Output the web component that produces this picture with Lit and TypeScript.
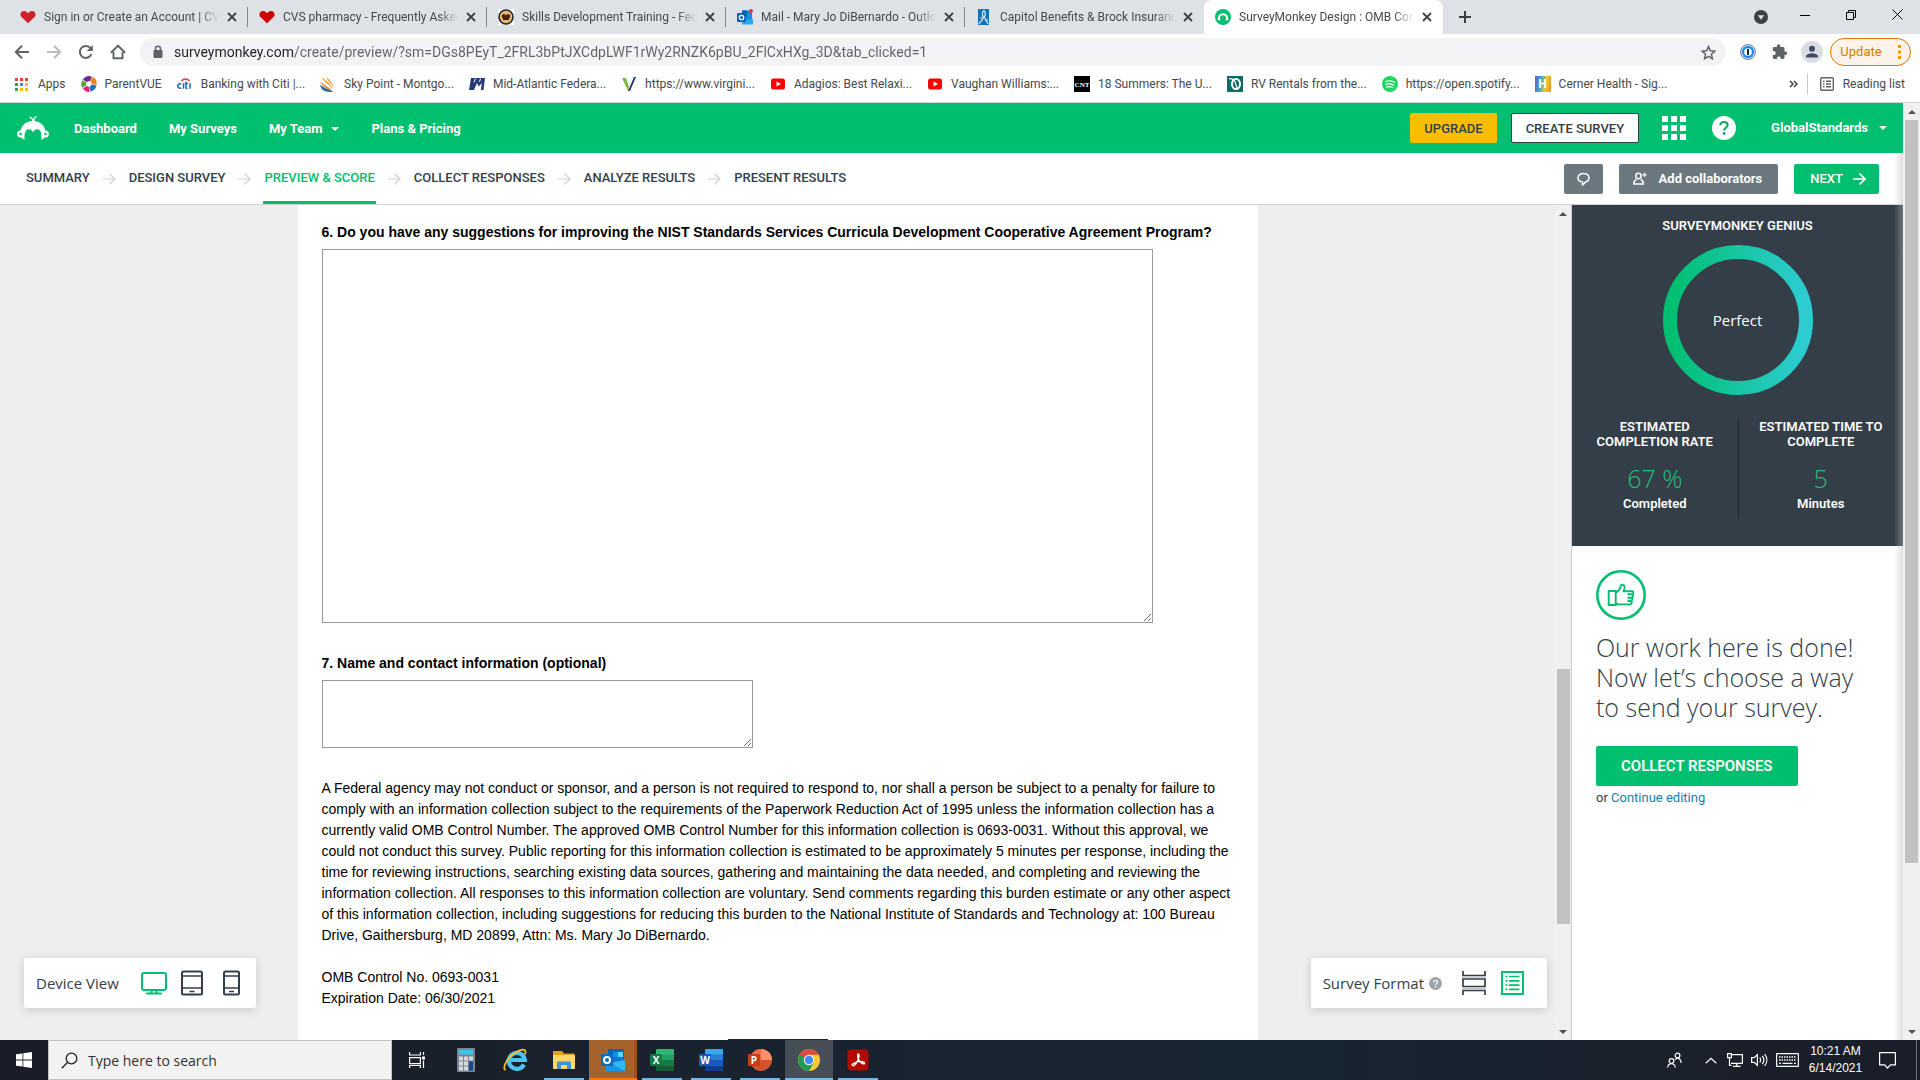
import { LitElement, html, svg, css, TemplateResult } from "lit";
import { customElement } from "lit/decorators.js";
import { classMap } from "lit/directives/class-map.js";

const icon = (w: number, h: number, body: unknown, box = `0 0 ${w} ${h}`) =>
  html`<svg width=${w} height=${h} viewBox=${box} fill="none" aria-hidden="true">${body}</svg>`;

const heart = (color: string) =>
  icon(16, 16, svg`<path d="M8 14.2 1.2 7.8C-.6 5.4 1 2 4 2c1.8 0 3.2 1 4 2.4C8.800 3 10.200 2 12 2c3 0 4.600 3.400 2.800 5.800z" fill=${color}/>`);

const monkeyPath = svg`<path d="M5.500 21.500a3.600 3.600 0 1 1-.7-7.100C5.600 8.600 10.500 5 17 5s11.400 3.600 12.200 9.400a3.600 3.600 0 1 1-.7 7.100c-.7 1.200-1.800 1.900-3.200 1.900.5-3.200.3-7-1.400-9-1.900-2.200-5.500-1.400-6.900 2-1.400-3.400-5-4.200-6.900-2-1.700 2-1.900 5.800-1.400 9-1.400 0-2.500-.7-3.200-1.900z" fill="#fff"/><circle cx="4.600" cy="18" r="1.300" fill="#00bf6f"/><circle cx="29.400" cy="18" r="1.300" fill="#00bf6f"/><path d="M17.400 5.600C17 3.400 15.800 1.800 13.600 1.200M17.600 5.400c0-2 .9-3.800 2.900-4.900" stroke="#fff" stroke-width="1.300"/>`;

const icons: Record<string, TemplateResult> = {
  cvs: heart("#cc2229"),
  cvsDark: heart("#cc0000"),
  skills: icon(16, 16, svg`<path d="M0 0h16v16H0z" fill="#fff"/><circle cx="8" cy="8" r="7" fill="#e8b96c" stroke="#1b2430" stroke-width="1.600"/><path d="M4 6c2-2 3 0 4 0s2-2 4 0c1 3-2 3-1 5H5c1-2-2-2-1-5z" fill="#4b2113"/>`),
  outlook: icon(16, 16, svg`<path d="M5 1.500h9a1 1 0 0 1 1 1V14a1 1 0 0 1-1 1H5z" fill="#1490df"/><path d="M5 1.500h5V8H5z" fill="#0364b8"/><path d="M5 10h11v4.500a1 1 0 0 1-1 1H5z" fill="#28a8ea"/><rect y="4" width="9" height="9" rx="1" fill="#0f60b8"/><circle cx="4.500" cy="8.500" r="2.200" stroke="#fff" stroke-width="1.300"/><circle cx="14" cy="2" r="2" fill="#e8383d"/>`),
  capitol: icon(16, 16, svg`<path d="M2 0h11v16H2z" fill="#0f74ba"/><path d="M3 15c2-4 4-3 4.500-7C5.500 6 6.500 3 8 1.500c1 1.500 2 4 .5 6 .5 4 2 3.500 3.500 7.500M4 9h3m2 2h3" stroke="#d9ebf8" stroke-width="1.200"/>`),
  survey: icon(16, 16, svg`<circle cx="8" cy="8" r="8" fill="#00bf6f"/><path d="M3.800 10.600C3.800 7 5.500 5.200 8 5.200s4.200 1.800 4.200 5.400" stroke="#fff" stroke-width="2"/><circle cx="4" cy="10.200" r="1.300" fill="#fff"/><circle cx="12" cy="10.200" r="1.300" fill="#fff"/>`),
  apps: icon(13, 13, svg`<path d="M0 0h3v3H0z M5 0h3v3H5z M10 0h3v3h-3z" fill="#ea4335"/><path d="M0 5h3v3H0z M0 10h3v3H0z" fill="#34a053"/><path d="M5 5h3v3H5z" fill="#4285f4"/><path d="M10 5h3v3h-3z M5 10h3v3H5z M10 10h3v3h-3z" fill="#fbbc05"/>`),
  parent: icon(16, 16, svg`<g stroke-width="5"><path d="M4 5a5 5 0 0 1 6-2" stroke="#6b2c91"/><path d="M10.500 3a5 5 0 0 1 2.500 5.500" stroke="#f58220"/><path d="M13 9a5 5 0 0 1-4 4" stroke="#1c75bc"/><path d="M8.500 13.500A5 5 0 0 1 4 11" stroke="#ec1c7b"/><path d="M3.300 10.500A5 5 0 0 1 3.500 5.500" stroke="#5aa23b"/></g>`),
  citi: icon(16, 16, svg`<path d="M4.500 5c2-2.700 6-2.700 8 0" stroke="#e0393e" stroke-width="1.400"/><path d="M4.300 8.200a2.100 2.300 0 1 0 0 3.600M6.500 7.200v5.600M9 5.500v6c0 1 .6 1.100 1.500 1.100M7.800 7.700h3M13 7.200v5.600" stroke="#1c6eb6" stroke-width="1.500"/>`),
  sky: icon(16, 16, svg`<path d="M1 1c5 3 10 7 12 13-3-5-8-7-12-13z" fill="#f0a13a"/><path d="M0 5c5 5 10 6 12 10C7 13 2 10 0 5z" fill="#e98a2b"/><path d="M0 8.500c4 4 9 4 13 7.500C6 16.500 1 15 0 8.500z" fill="#2f6f9b"/><path d="M6 1c5 3 7 7 8 12-2-5-6-7-8-12z" fill="#f3a84f"/>`),
  mid: icon(16, 16, svg`<path d="M2 2h14l-1.500 12h-2.700l1-7-3 3.500L8 7l-3 7H0z" fill="#263a78"/><path d="M6.500 2.500 5 6.500M11.500 2.500l-1 3.500" stroke="#fff"/>`),
  virginia: icon(16, 16, svg`<path d="M1 2h4l3 9-1 4z" fill="#7dbb42"/><path d="M13 1h2L9 15H7z" fill="#1c3664"/>`),
  youtube: icon(16, 16, svg`<rect x="1" y="2.500" width="14" height="11" rx="2.500" fill="#f00"/><path d="m6.500 5.500 4.500 2.500-4.500 2.500z" fill="#fff"/>`),
  cnt: icon(16, 16, svg`<path d="M0 0h16v16H0z" fill="#000"/><text x="8" y="10.500" text-anchor="middle" font-size="7" font-family="Liberation Serif, serif" font-weight="700" fill="#fff">CNT</text>`),
  rv: icon(16, 16, svg`<path d="M0 0h16v16H0z" fill="#0f6b63"/><ellipse cx="9" cy="8" rx="4" ry="5" stroke="#fff" stroke-width="2"/><path d="M2 3c3-1 5 1 6 3s1 5 3 7" stroke="#fff" stroke-width="1.200"/>`),
  spotify: icon(16, 16, svg`<circle cx="8" cy="8" r="8" fill="#1ed760"/><path d="M3.500 5.500c3-.9 6.500-.6 9 .8M4 8.200c2.600-.7 5.500-.4 7.700.8M4.500 10.800c2.200-.5 4.300-.3 6.200.7" stroke="#fff" stroke-width="1.300" stroke-linecap="round"/>`),
  cerner: html`<span class="cerner">H</span>`,
};

const tabs = [
  { icon: "cvs", title: "Sign in or Create an Account | CVS" },
  { icon: "cvsDark", title: "CVS pharmacy - Frequently Asked" },
  { icon: "skills", title: "Skills Development Training - Federal" },
  { icon: "outlook", title: "Mail - Mary Jo DiBernardo - Outlook" },
  { icon: "capitol", title: "Capitol Benefits & Brock Insurance" },
  { icon: "survey", title: "SurveyMonkey Design : OMB Control", active: true },
];

const bookmarks = [
  ["apps", "Apps"], ["parent", "ParentVUE"], ["citi", "Banking with Citi |..."], ["sky", "Sky Point - Montgo..."],
  ["mid", "Mid-Atlantic Federa..."], ["virginia", "https://www.virgini..."], ["youtube", "Adagios: Best Relaxi..."],
  ["youtube", "Vaughan Williams:..."], ["cnt", "18 Summers: The U..."], ["rv", "RV Rentals from the..."],
  ["spotify", "https://open.spotify..."], ["cerner", "Cerner Health - Sig..."],
];

const base = css`
  * { box-sizing: border-box; }
  button, input, textarea { font: inherit; color: inherit; margin: 0; }
  button { border: 0; padding: 0; background: none; cursor: pointer; display: flex; align-items: center; justify-content: center; }
  a { color: inherit; text-decoration: none; }
  svg { display: block; flex: none; }
`;

@customElement("browser-chrome")
export class BrowserChrome extends LitElement {
  static styles = [base, css`
    :host { display: block; flex: none; font: 12px/16px Roboto, sans-serif; color: #45484c; background: #fff; border-bottom: 1px solid #d4d6d9; }
    .strip { display: flex; height: 34px; padding-left: 9px; background: #dee1e6; }
    .tab { position: relative; display: flex; align-items: center; gap: 8px; flex: 0 1 239px; min-width: 0; padding: 0 11px; }
    .tab::after { content: ""; position: absolute; right: 0; top: 7px; width: 1px; height: 20px; background: #84878c; }
    .tab.last::after, .tab.active::after { display: none; }
    .tab.active { background: #fff; border-radius: 8px 8px 0 0; }
    .title { flex: 1; min-width: 0; overflow: hidden; white-space: nowrap; mask-image: linear-gradient(90deg, #000 calc(100% - 20px), transparent); }
    .close { width: 10px; height: 16px; }
    .plus { width: 44px; }
    .grow { flex: 1; }
    .win { width: 46px; height: 29px; }
    .drop { width: 42px; }
    .bar { display: flex; align-items: center; padding: 4px 9px 0 6px; }
    .tool { width: 32px; height: 28px; }
    .omni { display: flex; align-items: center; flex: 1; height: 28px; margin: 0 6px; padding: 0 10px 0 12px; border-radius: 14px; background: #f1f3f4; }
    .url { flex: 1; min-width: 0; height: 28px; margin-left: 10px; padding: 0; border: 0; outline: 0; font-size: 14px; color: transparent; background: linear-gradient(90deg, #202124 121px, #5f6368 121px) text; -webkit-background-clip: text; }
    .update { height: 28px; width: 81px; margin-left: 2px; border: 1px solid #e37400; border-radius: 14px; background: #fdf3ea; color: #e37400; gap: 16px; font-size: 13px; }
    .marks { display: flex; align-items: center; height: 36px; padding: 0 15px; gap: 15px; white-space: nowrap; }
    .mark { display: flex; align-items: center; gap: 8px; }
    .mark:first-child { gap: 10px; }
    .reading { display: flex; align-items: center; gap: 9px; padding-left: 12px; border-left: 1px solid #c4c7ca; height: 20px; }
    .more { margin-right: -6px; }
    .cerner { display: grid; place-items: center; width: 16px; height: 16px; font-weight: 700; color: #fff; background: linear-gradient(100deg, #7a4fc0, #36a9d8 35%, #f3c72c 65%, #f08a2c); }
  `];

  render() {
    return html`
      <div class="strip" role="tablist">
        ${tabs.map((t, i) => html`
          <div role="tab" class=${classMap({ tab: true, active: !!t.active, last: i === 4 })}>
            ${icons[t.icon]}<span class="title">${t.title}</span>
            <button class="close" aria-label="Close tab">${icon(10, 10, svg`<path d="m1 1 8 8M9 1 1 9" stroke="#3c4043" stroke-width="1.800"/>`)}</button>
          </div>`)}
        <button class="plus" aria-label="New tab">${icon(12, 12, svg`<path d="M6 0v12M0 6h12" stroke="#3c4043" stroke-width="2"/>`)}</button>
        <span class="grow"></span>
        <button class="drop" aria-label="Search tabs">${icon(14, 14, svg`<circle cx="7" cy="7" r="7" fill="#3c4043"/><path d="M3.800 5.300h6.400L7 9.800z" fill="#dee1e6"/>`)}</button>
        <button class="win" aria-label="Minimize">${icon(10, 10, svg`<path d="M0 5.500h10" stroke="#000"/>`)}</button>
        <button class="win" aria-label="Restore">${icon(10, 10, svg`<path d="M.5 2.500h7v7h-7zM2.500 2.500v-2h7v7h-2" stroke="#000"/>`)}</button>
        <button class="win" aria-label="Close">${icon(11, 11, svg`<path d="m.5.5 10 10M10.500.5l-10 10" stroke="#000"/>`)}</button>
      </div>
      <div class="bar">
        <button class="tool" aria-label="Back">${icon(16, 16, svg`<path d="M15 8H2.500M8 1.800 1.800 8 8 14.200" stroke="#5f6368" stroke-width="2"/>`)}</button>
        <button class="tool" aria-label="Forward">${icon(16, 16, svg`<path d="M1 8h12.500M8 1.800 14.200 8 8 14.200" stroke="#babcbe" stroke-width="2"/>`)}</button>
        <button class="tool" aria-label="Reload">${icon(16, 16, svg`<path d="M13.500 10A6 6 0 1 1 12.600 4.200" stroke="#5f6368" stroke-width="2"/><path d="M14.800 1v6h-6z" fill="#5f6368"/>`)}</button>
        <button class="tool" aria-label="Home">${icon(16, 16, svg`<path d="M3.500 8v6.200h9V8M.9 8.700 8 1.700l7.100 7" stroke="#5f6368" stroke-width="1.900"/>`)}</button>
        <div class="omni">
          ${icon(12, 14, svg`<rect x="1.500" y="5" width="9" height="8" rx="1" fill="#5f6368"/><path d="M3.500 5.500V3.700a2.500 2.500 0 0 1 5 0v1.800" stroke="#5f6368" stroke-width="1.500"/>`)}
          <input class="url" aria-label="Address" value="surveymonkey.com/create/preview/?sm=DGs8PEyT_2FRL3bPtJXCdpLWF1rWy2RNZK6pBU_2FlCxHXg_3D&tab_clicked=1">
          <button aria-label="Bookmark">${icon(15, 15, svg`<path d="m7.500 1.600 1.800 4.200 4.500.4-3.400 3 1 4.500-3.900-2.400-3.900 2.400 1-4.500-3.400-3 4.500-.4z" stroke="#5f6368" stroke-width="1.500"/>`)}</button>
        </div>
        <button class="tool" aria-label="Password manager">${icon(16, 16, svg`<circle cx="8" cy="8" r="7.400" fill="#fff" stroke="#6b7075"/><circle cx="8" cy="8" r="5" stroke="#1a8cff" stroke-width="2.400"/><path d="M8 5v6" stroke="#23272b" stroke-width="2"/>`)}</button>
        <button class="tool" aria-label="Extensions">${icon(16, 16, svg`<path d="M13.500 7.500h-1V4.400c0-.8-.6-1.400-1.400-1.400H8.300V2a1.700 1.700 0 0 0-3.400 0v1H2.200C1.400 3 .8 3.600.8 4.400v2.700h1a1.900 1.900 0 0 1 0 3.800h-1v2.700c0 .8.600 1.400 1.400 1.400H5v-1a1.900 1.900 0 0 1 3.700 0v1h2.400c.8 0 1.400-.6 1.400-1.400v-2.700h1a1.700 1.700 0 0 0 0-3.400z" fill="#5f6368"/>`)}</button>
        <button class="tool" aria-label="Profile">${icon(22, 22, svg`<circle cx="11" cy="11" r="11" fill="#dadde4"/><circle cx="11" cy="7.700" r="3" fill="#414a66"/><path d="M5 16.500v-1c0-2 4-3.200 6-3.200s6 1.200 6 3.200v1z" fill="#414a66"/>`)}</button>
        <button class="update">Update ${icon(3, 14, svg`<path d="M0 0h3v3H0zM0 5.500h3v3H0zM0 11h3v3H0z" fill="#f29900"/>`)}</button>
      </div>
      <nav class="marks" aria-label="Bookmarks">
        ${bookmarks.map(([i, t]) => html`<a class="mark" href="#">${icons[i]}${t}</a>`)}
        <span class="grow"></span>
        <button class="more" aria-label="More bookmarks">${icon(9, 8, svg`<path d="m1 1 3 3-3 3M5 1l3 3-3 3" stroke="#3c4043" stroke-width="1.500"/>`)}</button>
        <a class="reading" href="#">${icon(14, 14, svg`<rect x=".7" y=".7" width="12.600" height="12.600" rx="1" stroke="#5f6368" stroke-width="1.400"/><path d="M3 4.200h1.500M3 7h1.500M3 9.800h1.500M6 4.200h5M6 7h5M6 9.800h5" stroke="#5f6368" stroke-width="1.400"/>`)}Reading list</a>
      </nav>`;
  }
}

const caret = icon(8, 4, svg`<path d="M0 0h8L4 4z" fill="#fff"/>`);
const stepArrow = icon(13, 12, svg`<path d="M0 6h12M6.500.7 12 6l-5.500 5.300" stroke="#d0d2d3" stroke-width="1.200"/>`);
const steps = ["SUMMARY", "DESIGN SURVEY", "PREVIEW & SCORE", "COLLECT RESPONSES", "ANALYZE RESULTS", "PRESENT RESULTS"];

@customElement("site-header")
export class SiteHeader extends LitElement {
  static styles = [base, css`
    :host { display: block; flex: none; font: 700 13px/16px Roboto, sans-serif; }
    .top { display: flex; align-items: center; height: 50px; padding: 0 16px; background: #00bf6f; color: #fff; }
    .menu { display: flex; gap: 32px; margin: 0 auto 0 24px; padding-top: 2px; }
    .team { display: flex; align-items: center; gap: 9px; }
    .btn { height: 30px; border-radius: 2px; font-weight: 500; }
    .upgrade { padding: 2px 14px 0; margin-right: 14px; background: #f9be00; color: #333e48; }
    .create { padding: 2px 14px 0; border: 1px solid #333e48; background: #fff; color: #333e48; }
    .apps { margin: 0 26px 0 23px; }
    .account { gap: 11px; margin-left: 35px; font-weight: 700; }
    .sub { display: flex; align-items: center; justify-content: space-between; height: 52px; padding: 0 24px 0 25px; background: #fff; border-bottom: 1px solid #d0d2d3; color: #333e48; }
    .steps { display: flex; align-items: center; gap: 12px; height: 51px; margin: 0; padding: 0; list-style: none; font-weight: 500; }
    .step { display: flex; align-items: center; height: 51px; padding: 0 1px 1px; border-top: 3px solid transparent; border-bottom: 3px solid transparent; }
    .step.current { color: #00bf6f; border-bottom-color: #00bf6f; }
    .actions { display: flex; gap: 16px; color: #fff; }
    .gray { background: #6b787f; }
    .chat { width: 39px; }
    .collab { gap: 12px; padding: 0 16px 0 14px; font-weight: 700; }
    .next { gap: 10px; padding: 0 13px 0 16px; background: #00bf6f; }
  `];

  render() {
    return html`
      <header class="top">
        <a href="#" aria-label="Home">${icon(34, 24, monkeyPath)}</a>
        <nav class="menu">
          <a href="#">Dashboard</a><a href="#">My Surveys</a>
          <a class="team" href="#">My Team ${caret}</a><a href="#">Plans &amp; Pricing</a>
        </nav>
        <button class="btn upgrade">UPGRADE</button>
        <button class="btn create">CREATE SURVEY</button>
        <button class="apps" aria-label="Products">${icon(24, 24, svg`<path d="M0 0h6v6H0zM9 0h6v6H9zM18 0h6v6h-6zM0 9h6v6H0zM9 9h6v6H9zM18 9h6v6h-6zM0 18h6v6H0zM9 18h6v6H9zM18 18h6v6h-6z" fill="#fff"/>`)}</button>
        <button aria-label="Help">${icon(24, 24, svg`<circle cx="12" cy="12" r="12" fill="#fff"/><path d="M8.300 9.300c0-2.100 1.500-3.400 3.700-3.400 2.100 0 3.600 1.200 3.600 3.100 0 2.800-3.500 2.700-3.500 5.600" stroke="#00a862" stroke-width="2"/><circle cx="12.100" cy="17.400" r="1.400" fill="#00a862"/>`)}</button>
        <button class="account">GlobalStandards ${caret}</button>
      </header>
      <div class="sub">
        <ol class="steps">
          ${steps.map((s, i) => html`${i ? html`<li aria-hidden="true">${stepArrow}</li>` : ""}
            <li><a href="#" class=${classMap({ step: true, current: i === 2 })}>${s}</a></li>`)}
        </ol>
        <div class="actions">
          <button class="btn gray chat" aria-label="Comments">${icon(15, 14, svg`<path d="M7.500 1.500c-3.200 0-5.500 1.800-5.500 4.300s2 4 4.500 4.300V13l3.300-3.100C12 9.300 13 7.800 13 5.800c0-2.500-2.300-4.300-5.500-4.300z" stroke="#fff" stroke-width="1.500" stroke-linejoin="round"/>`)}</button>
          <button class="btn gray collab">${icon(14, 13, svg`<circle cx="5.500" cy="4" r="2.700" stroke="#fff" stroke-width="1.500"/><path d="M3.500 7.500C1.500 8.200.8 9.500.8 12h9.600c0-2.500-.8-3.800-2.700-4.500" stroke="#fff" stroke-width="1.500"/><path d="M11.500.8v4M9.500 2.800h4" stroke="#fff" stroke-width="1.300"/>`)}Add collaborators</button>
          <button class="btn next">NEXT ${icon(13, 12, svg`<path d="M0 6h12M6.500.7 12 6l-5.500 5.300" stroke="#fff" stroke-width="1.700"/>`)}</button>
        </div>
      </div>`;
  }
}

@customElement("scroll-bar")
export class ScrollBar extends LitElement {
  static properties = { before: { type: Number }, size: { type: Number }, after: { type: Number } };
  declare before: number;
  declare size: number;
  declare after: number;
  static styles = css`
    :host { display: flex; flex-direction: column; flex: none; align-items: center; width: 17px; background: #f0f0f0; }
    .end { display: grid; place-items: center; height: 17px; flex: none; }
    .thumb { width: 13px; background: #c1c1c1; }
    svg { display: block; }
  `;
  render() {
    return html`
      <span class="end">${icon(8, 4, svg`<path d="M0 4h8L4 0z" fill="#505050"/>`)}</span>
      <div style="flex:${this.before}"></div><div class="thumb" style="flex:${this.size}"></div><div style="flex:${this.after}"></div>
      <span class="end">${icon(8, 4, svg`<path d="M0 0h8L4 4z" fill="#505050"/>`)}</span>`;
  }
}

@customElement("survey-stage")
export class SurveyStage extends LitElement {
  static styles = [base, css`
    :host { position: relative; display: block; flex: 1; min-width: 0; background: #eee; overflow: hidden; font: 14px/21px "Liberation Sans", Arial, sans-serif; color: #000; }
    .sheet { display: flex; flex-direction: column; align-items: flex-start; max-width: 960px; height: 100%; margin: 0 auto; padding: 17px 24px 0; background: #fff; }
    .q { font-weight: 700; margin-bottom: 6px; }
    .box { display: block; width: 100%; border: 1px solid #999; background: #fff; resize: both; outline: 0; }
    .essay { max-width: 831px; height: 374px; margin-bottom: 30px; }
    .contact { max-width: 431px; height: 68px; margin-bottom: 30px; }
    p { margin: 0 0 21px; }
    .done { align-self: center; width: 100px; height: 1px; margin-top: auto; background: #1b1b78; }
    .card { position: absolute; bottom: 32px; display: flex; align-items: center; height: 50px; padding: 0 12px; border-radius: 2px; background: #fff; box-shadow: 0 2px 10px rgba(0, 0, 0, .16); font: 15px/20px "Open Sans", sans-serif; color: #333e48; }
    .device { left: 24px; padding-right: 16px; }
    .desktop { margin: 0 14px 0 22px; }
    .tablet { margin-right: 20px; }
    .format { right: 8px; padding-right: 23px; }
    .help { margin: 0 20px 0 5px; }
    .classic { margin-left: 15px; }
  `];

  render() {
    return html`
      <div class="sheet">
        <label class="q" for="q6">6. Do you have any suggestions for improving the NIST Standards Services Curricula Development Cooperative Agreement Program?</label>
        <textarea class="box essay" id="q6"></textarea>
        <label class="q" for="q7">7. Name and contact information (optional)</label>
        <textarea class="box contact" id="q7"></textarea>
        <p>A Federal agency may not conduct or sponsor, and a person is not required to respond to, nor shall a person be subject to a penalty for failure to comply with an information collection subject to the requirements of the Paperwork Reduction Act of 1995 unless the information collection has a currently valid OMB Control Number. The approved OMB Control Number for this information collection is 0693-0031. Without this approval, we could not conduct this survey. Public reporting for this information collection is estimated to be approximately 5 minutes per response, including the time for reviewing instructions, searching existing data sources, gathering and maintaining the data needed, and completing and reviewing the information collection. All responses to this information collection are voluntary. Send comments regarding this burden estimate or any other aspect of this information collection, including suggestions for reducing this burden to the National Institute of Standards and Technology at: 100 Bureau Drive, Gaithersburg, MD 20899, Attn: Ms. Mary Jo DiBernardo.</p>
        <p>OMB Control No. 0693-0031<br>Expiration Date: 06/30/2021</p>
        <div class="done"></div>
      </div>
      <div class="card device">Device View
        <button class="desktop" aria-label="Desktop">${icon(26, 23, svg`<rect x="1" y="1" width="24" height="17" rx="2" stroke="#00bf6f" stroke-width="2"/><path d="M10.500 18v3M15.500 18v3M6 21.500h14" stroke="#00bf6f" stroke-width="2" stroke-linecap="round"/>`)}</button>
        <button class="tablet" aria-label="Tablet">${icon(22, 26, svg`<rect x="1" y="1.500" width="20" height="23" rx="1.500" stroke="#333e48" stroke-width="2"/><path d="M1 6h20M1 18h20M8.500 21.500h5" stroke="#333e48" stroke-width="1.600"/>`)}</button>
        <button aria-label="Phone">${icon(17, 26, svg`<rect x="1" y="1.500" width="15" height="23" rx="1.500" stroke="#333e48" stroke-width="2"/><path d="M1 6h15M1 18h15M6 21.500h5" stroke="#333e48" stroke-width="1.600"/>`)}</button>
      </div>
      <div class="card format">Survey Format
        <button class="help" aria-label="About survey format">${icon(13, 13, svg`<circle cx="6.500" cy="6.500" r="6.500" fill="#9ea5aa"/><path d="M4.600 5.200c0-1.200.8-1.900 2-1.900s1.900.7 1.900 1.700c0 1.500-1.900 1.400-1.900 3" stroke="#fff" stroke-width="1.200"/><circle cx="6.600" cy="9.700" r=".8" fill="#fff"/>`)}</button>
        <button aria-label="One question at a time">${icon(24, 24, svg`<path d="M1 0v4.500h22V0M1 8h22v7.500H1zM1 24v-4.500h22V24" stroke="#333e48" stroke-width="1.700"/><path d="M0 6.200h24M0 17.500h24" stroke="#b9bec2"/>`)}</button>
        <button class="classic" aria-label="Classic">${icon(23, 24, svg`<path d="M1 1h21v22H1z" stroke="#00bf6f" stroke-width="2"/><path d="M4.500 5.500h2M8 5.500h10.500M4.500 9.800h2M8 9.800h10.500M4.500 14.100h2M8 14.100h10.500M4.500 18.400h2M8 18.400h10.500" stroke="#00bf6f" stroke-width="1.700"/>`)}</button>
      </div>`;
  }
}

@customElement("genius-panel")
export class GeniusPanel extends LitElement {
  static styles = [base, css`
    :host { display: block; flex: none; box-sizing: border-box; width: 332px; border-left: 1px solid #ccc; background: #fff; font: 13px/16px Roboto, sans-serif; color: #333e48; }
    .score { padding: 13px 0 27px; background: #333e48; color: #fff; text-align: center; font-weight: 600; }
    .ring { display: grid; place-items: center; width: 150px; height: 150px; margin: 11px auto 24px; }
    .ring > * { grid-area: 1 / 1; }
    .verdict { font: 15px/20px "Open Sans", sans-serif; }
    .stats { display: grid; grid-template-columns: 1fr 1fr; min-height: 100px; }
    .stat { padding: 0 16px; line-height: 15px; }
    .stat + .stat { border-left: 1px solid #1f2932; }
    .num { margin: 14px 0 1px; font: 300 25px/30px "Open Sans", sans-serif; color: #1fbf75; }
    .unit { line-height: 20px; }
    .todo { padding: 24px; }
    h2 { margin: 12px 0 24px; padding-right: 16px; font: 300 25px/30px "Open Sans", sans-serif; }
    .collect { height: 40px; padding: 0 25px; border-radius: 2px; background: #00bf6f; color: #fff; font-size: 15px; font-weight: 600; }
    .or { margin: 4px 0 0; }
    .or a { color: #1583ad; }
  `];

  render() {
    return html`
      <section class="score">
        <div>SURVEYMONKEY GENIUS</div>
        <div class="ring">
          ${icon(150, 150, svg`<defs><linearGradient id="g"><stop stop-color="#00bf6f"/><stop offset="1" stop-color="#2dccd3"/></linearGradient></defs><circle cx="75" cy="75" r="68" stroke="url(#g)" stroke-width="14"/>`)}
          <span class="verdict">Perfect</span>
        </div>
        <div class="stats">
          <div class="stat">ESTIMATED COMPLETION RATE<div class="num">67 %</div><div class="unit">Completed</div></div>
          <div class="stat">ESTIMATED TIME TO COMPLETE<div class="num">5</div><div class="unit">Minutes</div></div>
        </div>
      </section>
      <section class="todo">
        ${icon(50, 50, svg`<circle cx="25" cy="25" r="23.700" stroke="#00bf6f" stroke-width="2.600"/><path d="M12.700 21h7v14h-7zM19.700 22.500c2.500-.8 4.300-3.200 5-6.500.4-1.700 3.500-1.800 3.800.7.200 1.700-.3 3.300-.8 4.600h8.500c1.600 0 1.600 2.700 0 2.900 1.400.4 1.200 3-.5 3.300 1.300.5 1 2.900-.5 3.100 1 .6.600 3.800-1.200 3.800H23c-1.300 0-2.200-.4-3.300-.8M31.500 24.300h4.700M31.500 27.700h4.200M31.500 31h3.600" stroke="#00bf6f" stroke-width="1.900"/>`)}
        <h2>Our work here is done! Now let’s choose a way to send your survey.</h2>
        <button class="collect">COLLECT RESPONSES</button>
        <p class="or">or <a href="#">Continue editing</a></p>
      </section>`;
  }
}

const office = (letter: string, dark: string, colors: string[]) => icon(26, 24, svg`
  <rect x="7" y="1" width="18" height="22" rx="1" fill=${colors[0]}/><path d="M7 6.500h18V12H7z" fill=${colors[1]}/>
  <path d="M7 12h18v5.500H7z" fill=${colors[2]}/><path d="M7 17.500h18V22a1 1 0 0 1-1 1H8a1 1 0 0 1-1-1z" fill=${colors[3]}/>
  <rect x="1" y="6" width="12" height="12" rx="1" fill=${dark}/>
  <text x="7" y="16" text-anchor="middle" font-family="Open Sans, sans-serif" font-weight="700" font-size="10" fill="#fff">${letter}</text>`);

const apps: { name: string; cls?: string; art: TemplateResult }[] = [
  { name: "Calculator", art: icon(18, 24, svg`<rect width="18" height="24" rx="1" fill="#7b858f"/><path d="M2 2h14v4.500H2z" fill="#3cc3f2"/><path d="M2 8.500h4v4H2zM7 8.500h4v4H7zM12 8.500h4v4h-4zM2 13.500h4v4H2zM7 13.500h4v4H7zM2 18.500h4v4H2zM7 18.500h4v4H7z" fill="#d5dade"/><path d="M12 13.500h4v9h-4z" fill="#134a8e"/>`) },
  { name: "Internet Explorer", art: icon(24, 24, svg`<path d="M21 16.500a8 8 0 1 1 .8-4.500H6.500" stroke="#4fc3f0" stroke-width="4.200"/><path d="M2.500 22C-1 20 4 10 11 5.500 16 2 22 0 22.500 3.500c.2 1-.2 2-.8 3" stroke="#f2c230" stroke-width="1.700"/>`) },
  { name: "File Explorer", cls: "open", art: icon(24, 20, svg`<path d="M1 1h9l2 2.500h10.500V18H1z" fill="#e0a11b"/><path d="M1 5h22v14H1z" fill="#fdd767"/><path d="M5 19v-6.500a1 1 0 0 1 1-1h12a1 1 0 0 1 1 1V19h-4v-4H9v4z" fill="#3f92d8"/>`) },
  { name: "Outlook", cls: "open alert", art: icon(26, 24, svg`<path d="M8 1h15a1 1 0 0 1 1 1v12H8z" fill="#1066b5"/><path d="M13 4h5v5h-5z" fill="#1490df"/><path d="M18 4h5v5h-5z" fill="#50d9ff"/><path d="M13 9h10v5H13z" fill="#0f78d4"/><path d="m6 13 9 5 10-6v10a1 1 0 0 1-1 1H7a1 1 0 0 1-1-1z" fill="#1b96e4"/><path d="m10 15 15 8V12z" fill="#35b8f1"/><rect x="1" y="6" width="12" height="12" rx="1" fill="#0f6cbd"/><circle cx="7" cy="12" r="3" stroke="#fff" stroke-width="2"/>`) },
  { name: "Excel", cls: "open", art: office("X", "#107c41", ["#2fb673", "#21a366", "#107c41", "#185c37"]) },
  { name: "Word", cls: "open", art: office("W", "#185abd", ["#41a5ee", "#2b7cd3", "#185abd", "#103f91"]) },
  { name: "PowerPoint", cls: "open", art: icon(26, 24, svg`<circle cx="14" cy="12" r="11" fill="#d35230"/><path d="M14 1a11 11 0 0 1 11 11H14z" fill="#ff8f6b"/><path d="M14 1a11 11 0 0 0-11 11h11z" fill="#ed6c47"/><rect x="1" y="6" width="12" height="12" rx="1" fill="#c43e1c"/><text x="7" y="16" text-anchor="middle" font-family="Open Sans, sans-serif" font-weight="700" font-size="10" fill="#fff">P</text>`) },
  { name: "Chrome", cls: "open front", art: icon(24, 24, svg`<circle cx="12" cy="12" r="11" fill="#fbc934"/><path d="M2.500 6.500A11 11 0 0 1 21.500 6.500H12L7.200 14.700z" fill="#dd4b3e"/><path d="M2.500 6.500A11 11 0 0 0 12 23l4.800-8.300L12 12z" fill="#229a53"/><path d="M2.500 6.500A11 11 0 0 1 21.500 6.500H12z" fill="#dd4b3e"/><circle cx="12" cy="12" r="5.200" fill="#f4f6f8"/><circle cx="12" cy="12" r="4.200" fill="#4689f2"/>`) },
  { name: "Acrobat", cls: "open", art: icon(22, 22, svg`<rect x=".5" y=".5" width="21" height="21" rx="4" fill="#b30b00"/><path d="M5.500 16.500c-1.700-1.200 3-3.500 6.500-4s6 .8 5.500 2c-1 1.500-5-1.500-6.200-4.500-.9-2.500-1-5 0-5s1 3-.3 6c-1.200 2.800-4 6.500-5.500 5.500z" stroke="#fff" stroke-width="1.400"/>`) },
];

@customElement("task-bar")
export class TaskBar extends LitElement {
  static styles = [base, css`
    :host { display: flex; flex: none; height: 40px; background: linear-gradient(90deg, #1a1c28, #19232f 40%, #172531 68%, #1a202c 88%, #191e29); color: #fff; font: 12px/17px "Open Sans", sans-serif; }
    .start { width: 48px; }
    .search { display: flex; align-items: center; gap: 10px; flex: 0 1 344px; padding: 0 12px; border: 1px solid #c3c3c3; background: #f2f2f2; color: #333; }
    .search input { flex: 1; min-width: 0; border: 0; outline: 0; background: none; padding: 0; font-size: 14px; }
    .search input::placeholder { color: #333; opacity: 1; }
    .view { width: 50px; }
    .apps { display: flex; gap: 1px; }
    .app { position: relative; width: 48px; }
    .open::after { content: ""; position: absolute; left: 4px; right: 4px; bottom: 0; height: 2px; background: #76b9ed; }
    .alert { background: #a5622d; box-shadow: inset -3px 0 #955323; }
    .alert::after { left: 0; right: 0; background: #ff7700; }
    .front { background: #464e57; }
    .front::after { left: 0; right: 0; }
    .tray { display: flex; align-items: center; margin-left: auto; padding-right: 20px; }
    .people { margin-right: 23px; }
    .up { margin-right: 10px; }
    .net { margin-right: 8px; }
    .vol { margin-right: 8px; }
    .clock { width: 73px; text-align: center; font: 12px/17px "Liberation Sans", sans-serif; }
    .peek { width: 4px; border-left: 1px solid #66707a; }
    .note { margin-left: 7px; }
  `];

  render() {
    return html`
      <button class="start" aria-label="Start">${icon(16, 16, svg`<path d="M0 2.300 6.500 1.400v6.200H0zM7.300 1.300 16 0v7.600H7.300zM0 8.400h6.500v6.200L0 13.700zM7.300 8.400H16V16l-8.700-1.200z" fill="#fff"/>`)}</button>
      <div class="search">
        ${icon(17, 17, svg`<circle cx="10.500" cy="6.500" r="5.300" stroke="#222" stroke-width="1.300"/><path d="M6.700 10.300.8 16.200" stroke="#222" stroke-width="1.300"/>`)}
        <input aria-label="Search" placeholder="Type here to search">
      </div>
      <button class="view" aria-label="Task view">${icon(16, 16, svg`<path d="M.6 0v3h10.800V0M.6 5.600h10.800v6H.6zM.6 16v-2.500h10.800V16M14.500 0v3M14.500 8.500V16" stroke="#fff" stroke-width="1.200"/><path d="M13 4.500h3v3h-3z" fill="#fff"/>`)}</button>
      <div class="apps">${apps.map(a => html`<button class="app ${a.cls ?? ""}" aria-label=${a.name}>${a.art}</button>`)}</div>
      <div class="tray">
        <button class="people" aria-label="People">${icon(15, 16, svg`<g stroke="#fff" stroke-width="1.200"><circle cx="10.500" cy="3.500" r="2.400"/><circle cx="4.500" cy="9" r="2.400"/><path d="M.8 15.500c0-5 7-5 7.500 0M8 7.500c3-2.500 6-.5 6.200 3.500"/></g>`)}</button>
        <button class="up" aria-label="Hidden icons">${icon(12, 7, svg`<path d="m.7 6.300 5.300-5 5.300 5" stroke="#fff" stroke-width="1.200"/>`)}</button>
        <button class="net" aria-label="Network">${icon(16, 14, svg`<path d="M5 1.600h10.400v8.800H4M9.800 10.400v3M6 13.400h7.600M.6.600h3.800v4H.6zM2.500 4.600v7.800h2" stroke="#fff" stroke-width="1.200"/>`)}</button>
        <button class="vol" aria-label="Volume">${icon(17, 14, svg`<path d="M.6 4.700h2.600l3.200-3v10.600l-3.200-3H.6zM8.800 4.500c1 1.500 1 3.500 0 5M11.200 2.800c2 2.500 2 6 0 8.400M13.600 1.200c3 3.500 3 8.200 0 11.600" stroke="#fff" stroke-width="1.200"/>`)}</button>
        <button aria-label="Touch keyboard">${icon(23, 14, svg`<rect x=".6" y=".6" width="21.800" height="12.800" rx=".5" stroke="#fff" stroke-width="1.200"/><path d="M3 4h17M3 7h17" stroke="#fff" stroke-width="1.400" stroke-dasharray="1.500 1"/><path d="M3 10.300h2M6.500 10.300h10M18 10.300h2" stroke="#fff" stroke-width="1.300"/>`)}</button>
        <div class="clock">10:21 AM<br>6/14/2021</div>
        <button class="note" aria-label="Notifications">${icon(17, 17, svg`<path d="M.6.600h15.800v12.300h-5L8.500 16l-2.900-3.100h-5z" stroke="#fff" stroke-width="1.200"/>`)}</button>
      </div>
      <span class="peek"></span>`;
  }
}

@customElement("app-root")
export class AppRoot extends LitElement {
  static styles = css`
    :host { display: flex; flex-direction: column; min-height: 100vh; }
    .page { display: flex; flex: 1; min-height: 0; }
    .site { position: relative; display: flex; flex: 1; flex-direction: column; min-width: 0; }
    .body { display: flex; flex: 1; min-height: 0; }
    .shade { position: absolute; top: 50px; right: 0; bottom: 0; width: 9px; pointer-events: none; background: linear-gradient(90deg, rgba(184, 186, 188, 0), rgba(184, 186, 188, .45)); }
    .inner { width: 16px; }
  `;
  render() {
    return html`
      <browser-chrome></browser-chrome>
      <div class="page">
        <div class="site">
          <site-header></site-header>
          <main class="body">
            <survey-stage></survey-stage>
            <scroll-bar class="inner" .before=${447} .size=${255} .after=${99}></scroll-bar>
            <genius-panel></genius-panel>
          </main>
          <div class="shade"></div>
        </div>
        <scroll-bar .before=${0} .size=${743} .after=${160}></scroll-bar>
      </div>
      <task-bar></task-bar>`;
  }
}
